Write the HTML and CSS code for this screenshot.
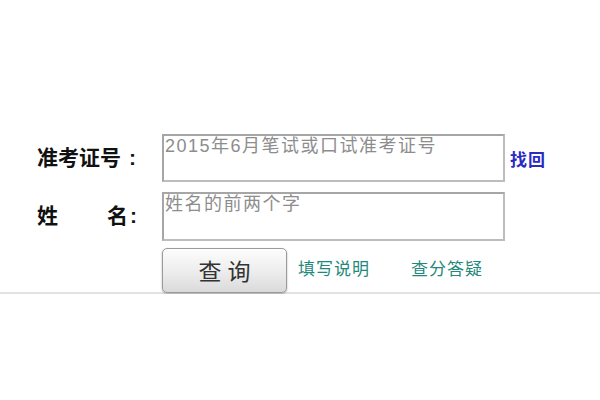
FILE: index.html
```html
<!DOCTYPE html>
<html>
<head>
  <meta charset="utf-8">
  <link rel="stylesheet" href="styles.css">
</head>
<body>
  <div class="query">
    <div class="row">
      <div class="lbl">准考证号<span class="colon">:</span></div>
      <textarea class="box" placeholder="2015年6月笔试或口试准考证号"></textarea>
      <a class="find" href="#">找回</a>
    </div>
    <div class="row r2">
      <div class="lbl">姓<span class="gap"></span>名<span class="colon c2">:</span></div>
      <textarea class="box tall" placeholder="姓名的前两个字"></textarea>
    </div>
    <div class="row act">
      <button class="btn">查询</button>
      <a class="help" href="#">填写说明</a>
      <a class="help qa" href="#">查分答疑</a>
    </div>
  </div>
</body>
</html>
```

FILE: styles.css
```css
body{margin:0;background:#fff;font-family:"Noto Sans CJK SC","Liberation Sans",sans-serif;}
.query{padding:134px 0 0 37px;border-bottom:2px solid #e2e2e2;height:158px;}
.row{display:flex;align-items:center;}
.r2{margin-top:10px;}
.lbl{width:125px;font-size:21px;font-weight:bold;color:#111;white-space:nowrap;line-height:24px;padding-bottom:3px;}
.colon{font-family:"Liberation Sans",sans-serif;margin-left:8px;}
.c2{margin-left:2px;}
.gap{display:inline-block;width:49px;}
.box{box-sizing:border-box;width:343px;height:48px;margin:0;border:2px solid #a6a6a6;border-right-color:#bdbdbd;border-bottom-color:#bdbdbd;padding:0 0 0 1px;resize:none;font-family:"Liberation Sans","Noto Sans CJK SC",sans-serif;font-size:18px;letter-spacing:1.5px;line-height:21px;color:#333;}
.tall{height:49px;}
.box::placeholder{color:#8d8d8d;}
.find{margin-left:5px;font-size:17px;font-weight:bold;letter-spacing:1px;color:#2a2ac4;text-decoration:none;}
.act{margin-top:6px;padding-left:125px;height:45px;}
.btn{box-sizing:border-box;width:125px;height:45px;margin:0 0 -2px;border:1px solid #9a9a9a;border-radius:5px;background:linear-gradient(#fdfdfd,#ececec 55%,#dadada);box-shadow:0 1px 2px #aaa;font-family:"Noto Sans CJK SC",sans-serif;font-size:23px;letter-spacing:6px;padding:0 0 2px 6px;color:#333;}
.help{margin-left:11px;padding-bottom:4px;font-size:17px;letter-spacing:1px;color:#1f8a7c;text-decoration:none;}
.qa{margin-left:41px;}
```
